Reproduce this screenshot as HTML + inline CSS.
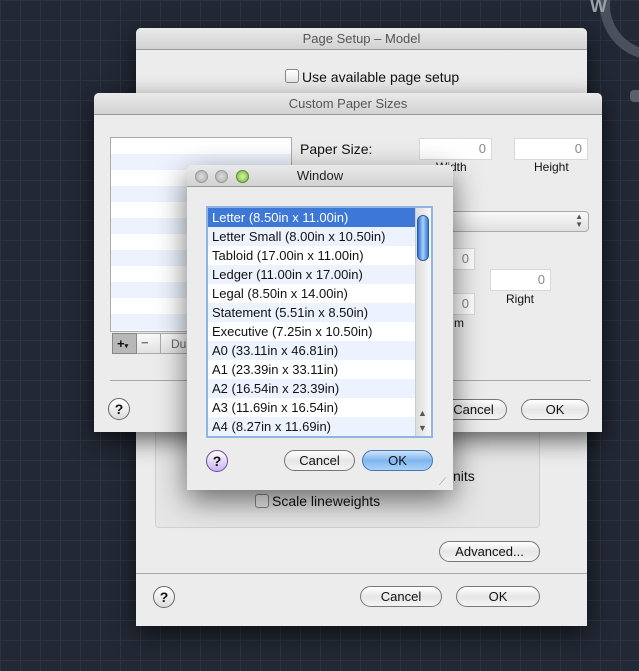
<!DOCTYPE html>
<html><head><style>
*{box-sizing:border-box;margin:0;padding:0}
body{width:639px;height:671px;overflow:hidden;position:relative;font-family:"Liberation Sans",sans-serif;font-size:13px;color:#111;
background-color:#222834;background-image:linear-gradient(#2c3342 1px,transparent 1px),linear-gradient(90deg,#2c3342 1px,transparent 1px);background-size:20px 20px}
.abs{position:absolute}
.win{position:absolute;background:#ececec;border-radius:5px 5px 0 0;box-shadow:0 8px 24px rgba(0,0,0,.6)}
.tb{height:22px;border-bottom:1px solid #9a9a9a;border-radius:5px 5px 0 0;background:linear-gradient(#eaeaea,#d2d2d2);text-align:center;line-height:22px;color:#555;font-size:13px}
.btn{position:absolute;height:21px;border:1px solid #777;border-radius:11px;background:linear-gradient(#fff,#e6e6e6 50%,#f4f4f4);text-align:center;line-height:19px;font-size:13px;color:#111}
.ok{background:linear-gradient(#cde4fb,#7fb6ee 50%,#a8d3fb);border-color:#4a76b0}
.help{position:absolute;width:22px;height:22px;border:1px solid #666;border-radius:50%;background:linear-gradient(#fff,#ddd);text-align:center;line-height:20px;font-weight:bold;font-size:14px}
.cb{position:absolute;width:14px;height:14px;border:1px solid #888;border-radius:3px;background:linear-gradient(#fff,#e8e8e8)}
.fld{position:absolute;background:#fff;border:1px solid #d8d8d8;text-align:right;padding-right:5px;color:#888;line-height:20px}
.row{height:19px;line-height:19px;padding-left:4px;font-size:13px;white-space:nowrap}
.row:nth-child(even){background:#edf3fe}
</style></head><body>
<div class="abs" style="left:600px;top:-50px;width:110px;height:110px;border:10px solid #4a505c;border-radius:50%"></div>
<div class="abs" style="left:590px;top:-4px;color:#9aa0aa;font-weight:bold;font-size:18px">W</div>
<div class="abs" style="left:630px;top:90px;width:14px;height:12px;background:#5a606a;border-radius:4px"></div>

<!-- Page Setup -->
<div class="win" style="left:136px;top:28px;width:451px;height:598px;border-radius:5px 5px 0 0">
<div class="tb">Page Setup – Model</div>
</div>
<div class="cb" style="left:285px;top:69px"></div>
<div class="abs" style="left:302px;top:69px;font-size:14px">Use available page setup</div>
<div class="abs" style="left:155px;top:420px;width:385px;height:108px;border:1px solid #d0d0d0;border-radius:4px;background:#e6e6e6"></div>
<div class="abs" style="left:453px;top:468px;font-size:14px">nits</div>
<div class="cb" style="left:255px;top:494px"></div>
<div class="abs" style="left:272px;top:493px;font-size:14px">Scale lineweights</div>
<div class="btn" style="left:439px;top:541px;width:101px">Advanced...</div>
<div class="abs" style="left:136px;top:573px;width:451px;height:1px;background:#a8a8a8"></div>
<div class="help" style="left:153px;top:586px">?</div>
<div class="btn" style="left:360px;top:586px;width:82px">Cancel</div>
<div class="btn" style="left:456px;top:586px;width:84px">OK</div>

<!-- Custom Paper Sizes -->
<div class="win" style="left:94px;top:93px;width:508px;height:339px">
<div class="tb">Custom Paper Sizes</div>
</div>
<div class="abs" style="left:110px;top:137px;width:182px;height:195px;border:1px solid #aaa;background:repeating-linear-gradient(#fff 0 16px,#edf3fe 16px 32px)"></div>
<div class="abs" style="left:112px;top:333px;width:180px;height:21px;border:1px solid #aaa;background:linear-gradient(#fafafa,#e2e2e2)"></div>
<div class="abs" style="left:112px;top:333px;width:25px;height:21px;background:#b8b8b8;border:1px solid #888;font-weight:bold;line-height:19px;padding-left:4px">+<span style="font-size:7px">▾</span></div>
<div class="abs" style="left:141px;top:335px;color:#777;font-weight:bold">−</div>
<div class="abs" style="left:160px;top:333px;width:1px;height:21px;background:#aaa"></div>
<div class="abs" style="left:171px;top:337px;color:#666;font-size:12px">Du</div>
<div class="abs" style="left:300px;top:141px;font-size:14px">Paper Size:</div>
<div class="fld" style="left:419px;top:138px;width:73px;height:22px">0</div>
<div class="fld" style="left:514px;top:138px;width:74px;height:22px">0</div>
<div class="abs" style="left:436px;top:160px;font-size:12px">Width</div>
<div class="abs" style="left:534px;top:160px;font-size:12px">Height</div>
<div class="abs" style="left:400px;top:211px;width:189px;height:21px;border:1px solid #aaa;border-radius:4px;background:linear-gradient(#fafafa,#e0e0e0)"><span style="position:absolute;right:5px;top:1px;font-size:8px;line-height:8px;color:#555">▲<br>▼</span></div>
<div class="fld" style="left:452px;top:248px;width:23px;height:22px">0</div>
<div class="fld" style="left:452px;top:293px;width:23px;height:22px">0</div>
<div class="fld" style="left:490px;top:269px;width:61px;height:22px">0</div>
<div class="abs" style="left:506px;top:292px;font-size:12px">Right</div>
<div class="abs" style="left:454px;top:316px;font-size:12px">m</div>
<div class="abs" style="left:110px;top:380px;width:481px;height:1px;background:#a8a8a8"></div>
<div class="help" style="left:108px;top:398px">?</div>
<div class="btn" style="left:440px;top:399px;width:67px">Cancel</div>
<div class="btn" style="left:521px;top:399px;width:68px">OK</div>

<!-- Window dialog -->
<div class="win" style="left:187px;top:165px;width:266px;height:325px;box-shadow:0 10px 30px rgba(0,0,0,.55)">
<div class="tb" style="color:#222">Window</div>
<div class="abs" style="left:8px;top:5px;width:13px;height:13px;border-radius:50%;background:radial-gradient(#ddd,#aaa);border:1px solid #999"></div>
<div class="abs" style="left:28px;top:5px;width:13px;height:13px;border-radius:50%;background:radial-gradient(#ddd,#aaa);border:1px solid #999"></div>
<div class="abs" style="left:49px;top:5px;width:13px;height:13px;border-radius:50%;background:radial-gradient(#d9f7a8,#68b22c);border:1px solid #5a8a30"></div>
</div>
<div class="abs" style="left:206px;top:206px;width:227px;height:232px;border:2px solid #8db5e6;background:#fff;overflow:hidden">
<div style="width:207px">
<div class="row" style="background:#3d78d6;color:#fff">Letter (8.50in x 11.00in)</div>
<div class="row">Letter Small (8.00in x 10.50in)</div>
<div class="row">Tabloid (17.00in x 11.00in)</div>
<div class="row">Ledger (11.00in x 17.00in)</div>
<div class="row">Legal (8.50in x 14.00in)</div>
<div class="row">Statement (5.51in x 8.50in)</div>
<div class="row">Executive (7.25in x 10.50in)</div>
<div class="row">A0 (33.11in x 46.81in)</div>
<div class="row">A1 (23.39in x 33.11in)</div>
<div class="row">A2 (16.54in x 23.39in)</div>
<div class="row">A3 (11.69in x 16.54in)</div>
<div class="row">A4 (8.27in x 11.69in)</div>
</div>
<div class="abs" style="left:207px;top:0;width:16px;height:228px;background:linear-gradient(90deg,#ddd,#f8f8f8);border-left:1px solid #ccc"></div>
<div class="abs" style="left:209px;top:7px;width:12px;height:46px;border-radius:6px;background:linear-gradient(90deg,#2f6fd0,#a9d0fb,#3a7ad6);border:1px solid #2a5ca8"></div>
<div class="abs" style="left:210px;top:198px;font-size:9px;color:#555;line-height:15px">▲<br>▼</div>
</div>
<div class="help" style="left:206px;top:450px;background:linear-gradient(#fff,#c9b3f0);border-color:#6a4a9a">?</div>
<div class="btn" style="left:284px;top:450px;width:71px">Cancel</div>
<div class="btn ok" style="left:362px;top:450px;width:71px">OK</div>
<div class="abs" style="left:439px;top:477px;color:#999;font-size:10px">⟋</div>
</body></html>
